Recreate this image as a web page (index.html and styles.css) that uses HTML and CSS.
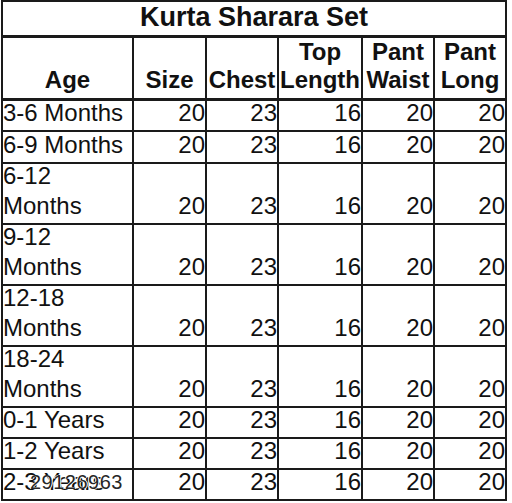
FILE: index.html
```html
<!DOCTYPE html>
<html lang="en">
<head>
<meta charset="utf-8">
<title>Kurta Sharara Set</title>
<link rel="stylesheet" href="styles.css">
</head>
<body>
<div class="chart">
  <div class="title">Kurta Sharara Set</div>

  <div class="head">Age</div>
  <div class="head">Size</div>
  <div class="head">Chest</div>
  <div class="head">Top Length</div>
  <div class="head">Pant Waist</div>
  <div class="head">Pant Long</div>

  <div class="age"><span>3-6 Months</span></div>
  <div class="num">20</div><div class="num">23</div><div class="num">16</div><div class="num">20</div><div class="num">20</div>

  <div class="age"><span>6-9 Months</span></div>
  <div class="num">20</div><div class="num">23</div><div class="num">16</div><div class="num">20</div><div class="num">20</div>

  <div class="age"><span>6-12<br>Months</span></div>
  <div class="num">20</div><div class="num">23</div><div class="num">16</div><div class="num">20</div><div class="num">20</div>

  <div class="age"><span>9-12<br>Months</span></div>
  <div class="num">20</div><div class="num">23</div><div class="num">16</div><div class="num">20</div><div class="num">20</div>

  <div class="age"><span>12-18<br>Months</span></div>
  <div class="num">20</div><div class="num">23</div><div class="num">16</div><div class="num">20</div><div class="num">20</div>

  <div class="age"><span>18-24<br>Months</span></div>
  <div class="num">20</div><div class="num">23</div><div class="num">16</div><div class="num">20</div><div class="num">20</div>

  <div class="age"><span>0-1 Years</span></div>
  <div class="num">20</div><div class="num">23</div><div class="num">16</div><div class="num">20</div><div class="num">20</div>

  <div class="age"><span>1-2 Years</span></div>
  <div class="num">20</div><div class="num">23</div><div class="num">16</div><div class="num">20</div><div class="num">20</div>

  <div class="age last"><span>2-3 Years</span><span class="mark">29126963</span></div>
  <div class="num">20</div><div class="num">23</div><div class="num">16</div><div class="num">20</div><div class="num">20</div>
</div>
</body>
</html>
```
FILE: styles.css
```css
html, body {
  margin: 0;
  padding: 0;
  background: #ffffff;
}

body {
  width: 512px;
  height: 503px;
  overflow: hidden;
  font-family: "Liberation Sans", Arial, sans-serif;
  color: #111111;
}

.chart {
  display: grid;
  grid-template-columns: 131px 73px 72px 84px 72px 72px;
  grid-template-rows: 36px 63px 31px 32px 61px 61px 61px 61px 31px 31px 31px;
  width: max-content;
  margin-left: 1px;
  border-left: 2px solid #1a1a1a;
  border-top: 2px solid #1a1a1a;
}

.chart > div {
  box-sizing: border-box;
  display: flex;
  border-right: 2px solid #1a1a1a;
  border-bottom: 2px solid #1a1a1a;
}

.title {
  grid-column: 1 / -1;
  justify-content: center;
  align-items: flex-start;
  font-size: 27px;
  font-weight: bold;
  line-height: 30px;
  border-bottom-width: 3px !important;
}

.head {
  justify-content: center;
  align-items: flex-end;
  text-align: center;
  font-size: 24px;
  font-weight: bold;
  line-height: 28px;
  padding-bottom: 4px;
  border-bottom-width: 3px !important;
}

.age,
.num {
  align-items: flex-end;
  font-size: 24px;
  line-height: 30px;
  padding-bottom: 2px;
}

.age {
  justify-content: flex-start;
}

.num {
  justify-content: flex-end;
}

.last {
  position: relative;
}

.mark {
  position: absolute;
  left: 27px;
  bottom: 7px;
  font-size: 20px;
  line-height: 20px;
  color: #262626;
  letter-spacing: 0.5px;
  text-shadow: 1px 0 0 #ffffff, -1px 0 0 #ffffff;
}
```
